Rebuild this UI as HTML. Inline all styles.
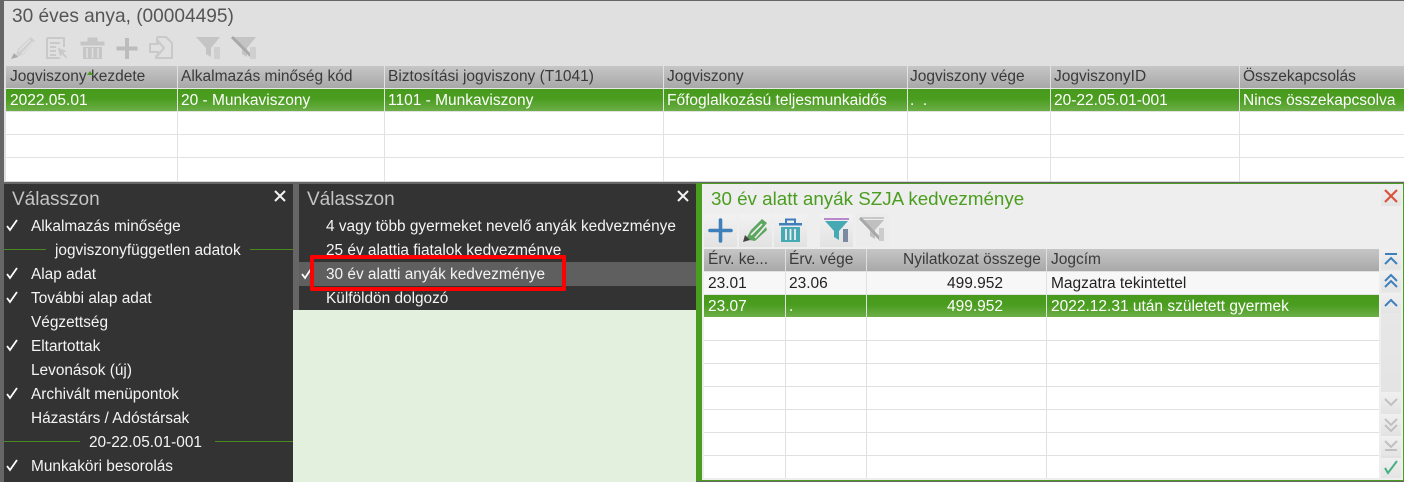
<!DOCTYPE html>
<html><head><meta charset="utf-8"><style>
html,body{margin:0;padding:0}
body{width:1404px;height:482px;position:relative;overflow:hidden;background:#666;font-family:"Liberation Sans",sans-serif;font-size:15.5px}
div,svg{position:absolute}
.t{white-space:nowrap;line-height:22px;height:22px}
.hd{background:linear-gradient(#c6c6c6,#a8a8a8);color:#333}
.sel{background:linear-gradient(#489a1c 0%,#4b9d20 45%,#6cae48 100%)}
.w{color:#fff}.d{color:#222}.h{color:#3a3a3a}
.m{color:#f4f4f4;left:31px;font-size:15.400px}
.b{width:20px;height:20px;left:1381px;background:linear-gradient(#f0f0f0,#e4e4e4)}
.tb{height:33px;background:linear-gradient(#f2f2f2,#e2e2e2);top:214px}
</style></head><body>
<div style="left:4px;top:1px;width:1400px;height:181px;background:#e0e0e0"></div>
<div class="t" style="left:12px;top:6px;font-size:19.100px;color:#555">30 éves anya, (00004495)</div>
<!-- top toolbar -->
<svg style="left:8px;top:34px" width="262" height="28" viewBox="0 0 262 28" fill="none">
<path d="M7 24 L10 15 L23 3 L27 7 L16 20 Z" fill="#cfcfcf"/><path d="M11 17l11-11M14 20l11-12" stroke="#e0e0e0" stroke-width="1.6"/><path d="M3 25l3-6 4 4z" fill="#aaa"/>
<path d="M39 4h17v9M39 4v20h14M42 9h10M42 13h6M42 17h6M42 21h6" stroke="#c9c9c9" stroke-width="2"/><path d="M49 13l11 4-4 2 4 4-2 2-4-4-2 3z" fill="#c9c9c9" stroke="#e0e0e0"/>
<path d="M73 8h23v3H73zM80 8V4h9v4" fill="#c6c6c6" stroke="#c6c6c6"/><path d="M75 13h19v12H75z" fill="#c6c6c6"/><path d="M79 14v10M84.500 14v10M90 14v10" stroke="#e0e0e0" stroke-width="1.6"/>
<path d="M119 4v21M108.500 14.500h21" stroke="#bcbcbc" stroke-width="4"/>
<path d="M149 3h9l6 6v15h-16v-3M149 9V3" stroke="#c9c9c9" stroke-width="2"/><path d="M142 10h8V7l6 7-6 7v-3h-8z" fill="#e0e0e0" stroke="#c9c9c9" stroke-width="2"/>
<path d="M188 3h24l-9 11v9l-5-3v-6z" fill="#c4c4c4"/><path d="M206 13h6v12h-6z" fill="#cfcfcf"/>
<path d="M224 3h24l-9 11v9l-5-3v-6z" fill="#c4c4c4"/><path d="M224 3l21 21" stroke="#a9a9a9" stroke-width="3"/><path d="M242 13h6v12h-6z" fill="#cfcfcf"/>
</svg>
<!-- top table -->
<div style="left:6px;top:66px;width:1398px;height:115px;background:#fff"></div>
<div class="hd" style="left:6px;top:66px;width:1398px;height:22px"></div>
<div class="sel" style="left:6px;top:89px;width:1398px;height:22px"></div>
<div style="left:6px;top:88px;width:1398px;height:1px;background:#e6e6e6"></div>
<div style="left:6px;top:111px;width:1398px;height:1px;background:#e2e2e2"></div>
<div style="left:6px;top:134px;width:1398px;height:1px;background:#e2e2e2"></div>
<div style="left:6px;top:157px;width:1398px;height:1px;background:#e2e2e2"></div>
<div style="left:177px;top:66px;width:1px;height:115px;background:#e2e2e2"></div>
<div style="left:384px;top:66px;width:1px;height:115px;background:#e2e2e2"></div>
<div style="left:663px;top:66px;width:1px;height:115px;background:#e2e2e2"></div>
<div style="left:907px;top:66px;width:1px;height:115px;background:#e2e2e2"></div>
<div style="left:1050px;top:66px;width:1px;height:115px;background:#e2e2e2"></div>
<div style="left:1239px;top:66px;width:1px;height:115px;background:#e2e2e2"></div>
<div class="t h" style="left:10px;top:66px">Jogviszony kezdete</div>
<div style="left:87px;top:71px;width:0;height:0;border-left:3px solid transparent;border-right:3px solid transparent;border-bottom:4px solid #4b9d20"></div>
<div class="t h" style="left:181px;top:66px">Alkalmazás minőség kód</div>
<div class="t h" style="left:388px;top:66px">Biztosítási jogviszony (T1041)</div>
<div class="t h" style="left:667px;top:66px">Jogviszony</div>
<div class="t h" style="left:910px;top:66px">Jogviszony vége</div>
<div class="t h" style="left:1054px;top:66px">JogviszonyID</div>
<div class="t h" style="left:1243px;top:66px">Összekapcsolás</div>
<div class="t w" style="left:10px;top:90px">2022.05.01</div>
<div class="t w" style="left:181px;top:90px">20 - Munkaviszony</div>
<div class="t w" style="left:388px;top:90px">1101 - Munkaviszony</div>
<div class="t w" style="left:667px;top:90px">Főfoglalkozású teljesmunkaidős</div>
<div class="t w" style="left:910px;top:90px">.&nbsp;&nbsp;.</div>
<div class="t w" style="left:1054px;top:90px">20-22.05.01-001</div>
<div class="t w" style="left:1243px;top:90px">Nincs összekapcsolva</div>
<div style="left:4px;top:181px;width:1400px;height:1px;background:#d8d8d8"></div>
<!-- left panel -->
<div style="left:4px;top:184px;width:289px;height:298px;background:#333"></div>
<div class="t" style="left:12px;top:189px;font-size:19px;color:#c4c4c4">Válasszon</div>
<svg style="left:273px;top:189px" width="14" height="14"><path d="M2 2l10 10M12 2L2 12" stroke="#f2f2f2" stroke-width="2"/></svg>
<svg style="left:0;top:184px" width="30" height="298" fill="none" stroke="#fff" stroke-width="1.800">
<path d="M7 42l3 4 7-10M7 90l3 4 7-10M7 114l3 4 7-10M7 162l3 4 7-10M7 210l3 4 7-10M7 282l3 4 7-10"/></svg>
<div class="t m" style="top:216px">Alkalmazás minősége</div>
<div style="left:4px;top:249px;width:42px;height:1px;background:#4b8a22"></div>
<div class="t m" style="left:55px;top:240px">jogviszonyfüggetlen adatok</div>
<div style="left:250px;top:249px;width:43px;height:1px;background:#4b8a22"></div>
<div class="t m" style="top:264px">Alap adat</div>
<div class="t m" style="top:288px">További alap adat</div>
<div class="t m" style="top:312px">Végzettség</div>
<div class="t m" style="top:336px">Eltartottak</div>
<div class="t m" style="top:360px">Levonások (új)</div>
<div class="t m" style="top:384px">Archivált menüpontok</div>
<div class="t m" style="top:408px">Házastárs / Adóstársak</div>
<div style="left:4px;top:441px;width:76px;height:1px;background:#4b8a22"></div>
<div class="t m" style="left:89px;top:432px">20-22.05.01-001</div>
<div style="left:215px;top:441px;width:78px;height:1px;background:#4b8a22"></div>
<div class="t m" style="top:456px">Munkaköri besorolás</div>
<!-- middle -->
<div style="left:293px;top:310px;width:403px;height:172px;background:#e4f0de"></div>
<div style="left:299px;top:184px;width:397px;height:126px;background:#333"></div>
<div class="t" style="left:307px;top:189px;font-size:19px;color:#c4c4c4">Válasszon</div>
<svg style="left:676px;top:189px" width="14" height="14"><path d="M2 2l10 10M12 2L2 12" stroke="#f2f2f2" stroke-width="2"/></svg>
<div class="t m" style="left:326px;top:216px">4 vagy több gyermeket nevelő anyák kedvezménye</div>
<div class="t m" style="left:326px;top:240px">25 év alattia fiatalok kedvezménye</div>
<div style="left:299px;top:262px;width:397px;height:24px;background:#5f5f5f"></div>
<svg style="left:299px;top:262px" width="16" height="24" fill="none" stroke="#fff" stroke-width="1.800"><path d="M3 12l3 4 6-9"/></svg>
<div class="t m" style="left:326px;top:264px">30 év alatti anyák kedvezménye</div>
<div class="t m" style="left:326px;top:288px">Külföldön dolgozó</div>
<div style="left:310px;top:255px;width:248px;height:28px;border:4px solid #f00;border-radius:1px"></div>
<!-- right panel -->
<div style="left:696px;top:183px;width:708px;height:298px;background:#4b9d20"></div>
<div style="left:702px;top:184px;width:701px;height:296px;background:#eee"></div>
<div class="t" style="left:711px;top:188px;font-size:18.800px;color:#4b9d20">30 év alatt anyák SZJA kedvezménye</div>
<div class="b" style="top:186px"></div>
<svg style="left:1381px;top:186px" width="20" height="20"><path d="M4 4l12 12M16 4L4 16" stroke="#d9533c" stroke-width="2.200"/></svg>
<div class="tb" style="left:704px;width:33px"></div>
<div class="tb" style="left:739px;width:33px"></div>
<div class="tb" style="left:774px;width:33px"></div>
<div class="tb" style="left:820px;width:33px"></div>
<div class="tb" style="left:856px;width:33px;background:#ececec"></div>
<svg style="left:704px;top:214px" width="190" height="33" fill="none">
<path d="M16.500 6v21M6 16.500h21" stroke="#3f7fba" stroke-width="3.600" stroke-linecap="round"/>
<path d="M43 23l4-7L58 5l5 4-10 12 9-8 1 3-12 11-6-1z" fill="#5da65f"/><path d="M47 21L58 10M51 24L61 13" stroke="#eee" stroke-width="1.600"/><path d="M39 28l2-7 5 5z" fill="#444"/>
<path d="M75 9h23v2.500H75z" fill="#3f7fba"/><path d="M82 9V5.500h9V9" stroke="#3f7fba" stroke-width="2"/><path d="M77 13h19v15H77z" fill="#46a9b3"/><path d="M82 15v11M86.500 15v11M91 15v11" stroke="#eee" stroke-width="1.800"/>
<path d="M120 5h25" stroke="#a865c0" stroke-width="1.500"/><path d="M121 7h23l-9 10v9l-5-3v-6z" fill="#46a9b3"/><path d="M139 15h5v13h-5z" fill="#7a8aa0"/>
<path d="M156 4h24" stroke="#bbb" stroke-width="1.500"/><path d="M157 6h23l-9 10v9l-5-3v-6z" fill="#c0c0c0"/><path d="M156 4l21 22" stroke="#a8a8a8" stroke-width="3"/><path d="M175 14h5v13h-5z" fill="#ccc"/>
</svg>
<!-- right table -->
<div style="left:704px;top:249px;width:675px;height:229px;background:#fff"></div>
<div class="hd" style="left:704px;top:249px;width:675px;height:22px"></div>
<div style="left:704px;top:272px;width:675px;height:22px;background:#f7f7f7"></div>
<div class="sel" style="left:704px;top:295px;width:675px;height:22px"></div>
<div style="left:704px;top:271px;width:675px;height:1px;background:#e2e2e2"></div>
<div style="left:704px;top:294px;width:675px;height:1px;background:#e2e2e2"></div>
<div style="left:704px;top:340px;width:675px;height:1px;background:#e0e0e0"></div>
<div style="left:704px;top:363px;width:675px;height:1px;background:#e0e0e0"></div>
<div style="left:704px;top:386px;width:675px;height:1px;background:#e0e0e0"></div>
<div style="left:704px;top:409px;width:675px;height:1px;background:#e0e0e0"></div>
<div style="left:704px;top:432px;width:675px;height:1px;background:#e0e0e0"></div>
<div style="left:704px;top:455px;width:675px;height:1px;background:#e0e0e0"></div>
<div style="left:785px;top:249px;width:1px;height:229px;background:#e0e0e0"></div>
<div style="left:866px;top:249px;width:1px;height:229px;background:#e0e0e0"></div>
<div style="left:1046px;top:249px;width:1px;height:229px;background:#e0e0e0"></div>
<div class="t h" style="left:708px;top:249px">Érv. ke...</div>
<div class="t h" style="left:789px;top:249px">Érv. vége</div>
<div class="t h" style="left:903px;top:249px">Nyilatkozat összege</div>
<div class="t h" style="left:1051px;top:249px">Jogcím</div>
<div class="t d" style="left:708px;top:273px">23.01</div>
<div class="t d" style="left:789px;top:273px">23.06</div>
<div class="t d" style="left:947px;top:273px">499.952</div>
<div class="t d" style="left:1051px;top:273px">Magzatra tekintettel</div>
<div class="t w" style="left:708px;top:296px">23.07</div>
<div class="t w" style="left:789px;top:296px">.</div>
<div class="t w" style="left:947px;top:296px">499.952</div>
<div class="t w" style="left:1051px;top:296px">2022.12.31 után született gyermek</div>
<!-- scroll column -->
<div style="left:1381px;top:249px;width:20px;height:229px;background:linear-gradient(#eaeaea,#e0e0e0)"></div>
<div class="b" style="top:249px"></div><div class="b" style="top:271px"></div><div class="b" style="top:293px"></div>
<div class="b" style="top:392px"></div><div class="b" style="top:414px"></div><div class="b" style="top:436px"></div><div class="b" style="top:458px"></div>
<svg style="left:1381px;top:249px" width="20" height="229" fill="none" stroke-width="2">
<g stroke="#3f7fba"><path d="M4 5h12M4 15l6-6 6 6"/><path d="M4 32l6-6 6 6M4 38l6-6 6 6"/><path d="M4 57l6-6 6 6"/></g>
<g stroke="#c0c0c0"><path d="M4 150l6 6 6-6"/><path d="M4 170l6 6 6-6M4 176l6 6 6-6"/><path d="M4 192l6 6 6-6M4 201h12"/></g>
<path d="M4 219l3 5 9-12" stroke="#47b082" stroke-width="2"/>
</svg>
</body></html>
